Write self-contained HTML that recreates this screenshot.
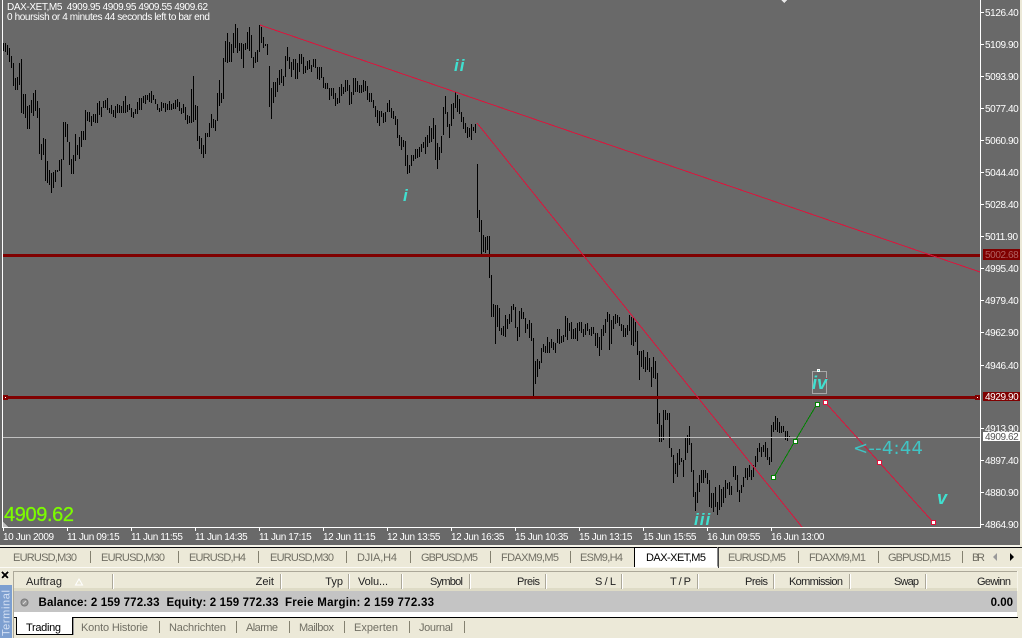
<!DOCTYPE html>
<html><head><meta charset="utf-8"><title>DAX-XET,M5</title>
<style>
html,body{margin:0;padding:0;width:1022px;height:638px;overflow:hidden;background:#ece9d8}
svg{display:block;position:absolute;left:0;top:0}
text{font-family:"Liberation Sans",sans-serif;white-space:pre}
.c text{font-size:10px;fill:#fff}
.tb text{font-size:11px;fill:#716f64}
.h text{font-size:11px;fill:#222}
.s line,.s path{shape-rendering:crispEdges}
</style></head><body>
<svg width="1022" height="638" viewBox="0 0 1022 638" xmlns="http://www.w3.org/2000/svg">
<rect x="0" y="0" width="1020" height="545" fill="#696969"/>
<g class="s">
<path stroke="#fff" stroke-width="1" fill="none" d="M2.5 0V527.5H980.5V0"/>
<path stroke="#fff" d="M981 12.5h3M981 44.5h3M981 76.5h3M981 108.5h3M981 140.5h3M981 172.5h3M981 204.5h3M981 236.5h3M981 268.5h3M981 300.5h3M981 332.5h3M981 365.5h3M981 428.5h3M981 460.5h3M981 492.5h3M981 524.5h3M3.5 528v3M67.5 528v3M131.5 528v3M195.5 528v3M259.5 528v3M323.5 528v3M387.5 528v3M451.5 528v3M515.5 528v3M579.5 528v3M643.5 528v3M707.5 528v3M771.5 528v3"/>
<!-- bars -->
<path transform="translate(.5 0)" stroke="#000" stroke-width="1" fill="none" d="M3 43V51M5 43V52M7 45V55M9 48V62M11 56V68M13 63V86M15 78V90M17 77V90M19 63V85M21 59V113M23 94V114M25 94V118M27 106V129M29 105V129M31 100V113M33 93V116M35 90V111M37 101V118M39 108V154M41 144V160M43 138V155M45 139V181M47 161V183M49 170V185M51 173V193M53 172V188M55 170V182M57 170V172M59 160V171M61 159V187M63 122V160M65 122V137M67 124V142M69 142V165M71 159V174M73 155V174M75 134V161M77 145V155M79 137V159M81 131V147M83 131V140M85 110V140M87 112V121M89 112V122M91 116V126M93 114V122M95 114V123M97 103V123M99 101V115M101 107V117M103 101V108M105 100V108M107 98V110M109 108V113M111 105V114M113 110V117M115 106V118M117 104V113M119 105V113M121 106V113M123 101V113M125 96V113M127 105V112M129 104V110M131 108V117M133 112V118M135 109V114M137 102V114M139 98V110M141 98V110M143 96V103M145 95V104M147 95V100M149 93V102M151 91V103M153 95V100M155 99V104M157 104V110M159 108V112M161 102V111M163 103V108M165 103V112M167 104V110M169 101V110M171 104V110M173 103V109M175 100V109M177 99V107M179 102V111M181 108V114M183 104V113M185 107V120M187 115V124M189 116V123M191 89V123M193 76V122M195 105V120M197 106V141M199 136V149M201 138V154M203 145V158M205 133V154M207 133V137M209 123V137M211 114V128M213 119V128M215 120V131M217 93V121M219 80V106M221 93V103M223 58V99M225 41V62M227 33V63M229 42V62M231 44V62M233 33V53M235 24V48M237 28V53M239 43V51M241 43V59M243 44V68M245 43V50M247 32V49M249 27V51M251 35V58M253 57V68M255 52V63M257 50V62M259 25V52M261 27V43M263 37V48M265 44V46M267 44V55M269 66V107M271 88V119M273 82V103M275 82V97M277 78V92M279 70V85M281 69V83M283 76V86M285 56V77M287 47V61M289 57V69M291 62V77M293 59V70M295 59V79M297 63V79M299 54V72M301 54V64M303 57V74M305 66V73M307 61V70M309 60V69M311 65V72M313 59V67M315 59V68M317 67V79M319 67V80M321 67V78M323 77V88M325 83V89M327 83V89M329 88V100M331 88V96M333 88V99M335 93V106M337 98V104M339 87V103M341 84V96M343 87V94M345 80V92M347 80V91M349 85V105M351 92V104M353 78V95M355 78V92M357 81V92M359 85V93M361 85V93M363 80V92M365 81V91M367 86V100M369 93V102M371 93V102M373 100V108M375 106V117M377 110V123M379 111V126M381 111V117M383 113V123M385 112V122M387 103V112M389 100V112M391 108V118M393 111V119M395 116V125M397 119V138M399 135V146M401 137V150M403 140V147M405 141V166M407 155V174M409 165V173M411 155V166M413 155V161M415 149V159M417 149V158M419 147V157M421 144V152M423 142V148M425 137V154M427 135V147M429 126V143M431 128V142M433 118V139M435 125V160M437 143V169M439 147V160M441 136V153M443 107V135M445 96V114M447 112V127M449 124V138M451 104V126M453 103V119M455 92V108M457 95V112M459 99V114M461 112V122M463 117V129M465 123V133M467 127V138M469 128V137M471 124V140M473 127V131M475 124V133M477 164V218M479 210V232M481 220V254M483 235V252M485 237V253M487 236V250M489 236V278M491 275V317M493 304V317M495 305V344M497 305V327M499 308V331M501 328V335M503 326V336M505 315V337M507 319V329M509 314V324M511 306V322M513 304V310M515 307V328M517 327V341M519 311V337M521 308V319M523 312V319M525 318V333M527 324V329M529 320V338M531 323V341M533 338V398M535 361V384M537 359V377M539 361V369M541 348V363M543 344V352M545 346V353M547 337V353M549 342V353M551 339V348M553 342V350M555 343V353M557 329V343M559 329V344M561 336V343M563 335V342M565 316V337M567 318V340M569 323V331M571 322V339M573 329V339M575 328V339M577 323V341M579 322V331M581 322V333M583 329V337M585 324V335M587 323V331M589 329V335M591 327V336M593 327V334M595 333V346M597 333V348M599 337V356M601 329V350M603 325V336M605 319V333M607 312V322M609 314V350M611 320V344M613 316V329M615 314V324M617 315V323M619 317V326M621 324V331M623 325V337M625 328V337M627 325V335M629 315V331M631 317V345M633 317V346M635 322V342M637 331V355M639 351V380M641 351V367M643 350V369M645 357V372M647 352V370M649 358V372M651 367V387M653 357V378M655 361V379M657 373V424M659 413V442M661 425V442M663 410V440M665 410V420M667 413V420M669 413V448M671 448V457M673 455V483M675 463V474M677 453V477M679 449V465M681 458V462M683 460V477M685 438V460M687 435V453M689 426V445M691 443V472M693 470V497M695 492V511M697 483V503M699 475V492M701 470V483M703 470V483M705 470V478M707 473V484M709 480V507M711 493V508M713 493V512M715 487V507M717 502V515M719 485V510M721 489V507M723 487V503M725 480V498M727 483V489M729 482V495M731 486V495M733 466V477M735 466V480M737 475V492M739 490V502M741 485V493M743 477V487M745 468V478M747 468V480M749 465V477M751 470V480M753 465V477M755 456V467M757 448V462M759 443V452M761 447V457M763 445V452M765 442V457M767 448V460M769 457V465M771 425V462M773 422V432M775 416V430M777 418V432M779 422V433M781 426V433M783 426V432M785 431V440M787 431V441M789 436V438"/>
<!-- horizontals -->
<rect x="3" y="254" width="977" height="3" fill="#800000"/>
<rect x="3" y="396" width="977" height="3" fill="#800000"/>
<rect x="3" y="395" width="5" height="5" fill="#800000"/><rect x="5" y="397" width="1" height="1" fill="#fff"/>
<rect x="975" y="395" width="5" height="5" fill="#800000"/><rect x="977" y="397" width="1" height="1" fill="#fff"/>
<rect x="3" y="437" width="977" height="1" fill="#c0c0c0"/>
<!-- trend lines -->
<line x1="260" y1="25" x2="980" y2="272" stroke="#dc143c"/>
<line x1="477" y1="123" x2="802" y2="527" stroke="#dc143c"/>
<line x1="825" y1="402" x2="879" y2="462" stroke="#dc143c"/>
<line x1="879" y1="462" x2="933" y2="522" stroke="#dc143c"/>
<line x1="774" y1="477" x2="795" y2="441" stroke="#008000"/>
<line x1="795" y1="441" x2="817" y2="404" stroke="#008000"/>
<g fill="#fff" stroke="#dc143c"><rect x="823.5" y="400.5" width="4" height="4"/><rect x="877.5" y="460.5" width="4" height="4"/><rect x="931.5" y="520.5" width="4" height="4"/></g>
<g fill="#fff" stroke="#008000"><rect x="771.5" y="475.5" width="4" height="4"/><rect x="793.5" y="439.5" width="4" height="4"/><rect x="815.5" y="402.5" width="4" height="4"/></g>
<rect x="812.5" y="371.5" width="14" height="22" fill="none" stroke="#a8a8a8"/>
<rect x="817" y="369" width="3" height="3" fill="#fff"/><rect x="818" y="370" width="1" height="1" fill="#40e0d0"/>
<rect x="826" y="378" width="1" height="1" fill="#dc143c"/>
<path fill="#e8e8e8" d="M781 0h6l-3 3z"/>
<path fill="#c0c0c0" d="M3 522l5 5H3z"/>
<!-- price boxes -->
<rect x="983" y="249" width="37" height="11" fill="#800000"/>
<rect x="983" y="392" width="37" height="9" fill="#800000"/>
<rect x="983" y="432" width="37" height="9" fill="#fff"/>
</g>
<!-- chart text -->
<g class="c">
<text x="7" y="10" textLength="201" lengthAdjust="spacing">DAX-XET,M5  4909.95 4909.95 4909.55 4909.62</text>
<text x="7" y="20" textLength="203" lengthAdjust="spacing">0 hoursish or 4 minutes 44 seconds left to bar end</text>
<g letter-spacing="-.4">
<text x="985" y="16">5126.40</text><text x="985" y="48">5109.90</text><text x="985" y="80">5093.90</text><text x="985" y="112">5077.40</text><text x="985" y="144">5060.90</text><text x="985" y="176">5044.40</text><text x="985" y="208">5028.40</text><text x="985" y="240">5011.90</text><text x="985" y="272">4995.40</text><text x="985" y="304">4979.40</text><text x="985" y="336">4962.90</text><text x="985" y="369">4946.40</text><text x="985" y="432">4913.90</text><text x="985" y="464">4897.40</text><text x="985" y="496">4880.90</text><text x="985" y="528">4864.90</text>
<text x="985" y="258" style="fill:#b06060">5002.68</text>
<text x="985" y="400">4929.90</text>
<text x="985" y="440" style="fill:#555">4909.62</text>
<text x="3" y="540">10 Jun 2009</text><text x="67" y="540">11 Jun 09:15</text><text x="131" y="540">11 Jun 11:55</text><text x="195" y="540">11 Jun 14:35</text><text x="259" y="540">11 Jun 17:15</text><text x="323" y="540">12 Jun 11:15</text><text x="387" y="540">12 Jun 13:55</text><text x="451" y="540">12 Jun 16:35</text><text x="515" y="540">15 Jun 10:35</text><text x="579" y="540">15 Jun 13:15</text><text x="643" y="540">15 Jun 15:55</text><text x="707" y="540">16 Jun 09:55</text><text x="771" y="540">16 Jun 13:00</text>
</g></g>
<g fill="#40e0d0" font-weight="bold" font-style="italic" font-size="17">
<text x="454" y="71" letter-spacing="1">ii</text>
<text x="403" y="201">i</text>
<text x="694" y="525" letter-spacing="1">iii</text>
<text x="812" y="389" style="font-size:18px">iv</text>
<text x="937" y="504" style="font-size:18px">v</text>
</g>
<text x="853" y="454" font-size="18" fill="#40c4c4" style="font-family:'DejaVu Sans',sans-serif" textLength="70" lengthAdjust="spacing">&lt;--4:44</text>
<text x="4" y="521" font-size="20" fill="#7cfc00" stroke="#7cfc00" stroke-width=".25" textLength="70" lengthAdjust="spacing">4909.62</text>
<!-- chart tabs -->
<g class="s">
<rect x="0" y="545" width="1022" height="2" fill="#f7f5ea"/>
<rect x="0" y="547" width="1022" height="1" fill="#111"/>
<rect x="1020" y="0" width="2" height="547" fill="#ece9d8"/>
<rect x="0" y="567" width="1022" height="1" fill="#fbfaf5"/>
<rect x="634" y="547" width="84" height="20" fill="#fff"/>
<path fill="none" stroke="#000" d="M634.5 567V547.5H717.5"/>
<path fill="none" stroke="#888" d="M717.5 548V566.5"/>
<rect x="718" y="548" width="1" height="20" fill="#444"/>
<path stroke="#848170" d="M90.5 551v12M178.5 551v12M258.5 551v12M346.5 551v12M410.5 551v12M490.5 551v12M570.5 551v12M798.5 551v12M878.5 551v12M962.5 551v12"/>
</g>
<g class="tb">
<text x="13" y="561" textLength="64" lengthAdjust="spacing">EURUSD,M30</text>
<text x="101" y="561" textLength="64" lengthAdjust="spacing">EURUSD,M30</text>
<text x="189" y="561" textLength="57" lengthAdjust="spacing">EURUSD,H4</text>
<text x="270" y="561" textLength="64" lengthAdjust="spacing">EURUSD,M30</text>
<text x="357" y="561" textLength="40" lengthAdjust="spacing">DJIA,H4</text>
<text x="421" y="561" textLength="57" lengthAdjust="spacing">GBPUSD,M5</text>
<text x="501" y="561" textLength="58" lengthAdjust="spacing">FDAXM9,M5</text>
<text x="580" y="561" textLength="43" lengthAdjust="spacing">ESM9,H4</text>
<text x="646" y="561" textLength="60" lengthAdjust="spacing" style="fill:#000">DAX-XET,M5</text>
<text x="728" y="561" textLength="58" lengthAdjust="spacing">EURUSD,M5</text>
<text x="809" y="561" textLength="57" lengthAdjust="spacing">FDAXM9,M1</text>
<text x="888" y="561" textLength="63" lengthAdjust="spacing">GBPUSD,M15</text>
<text x="972" y="561" textLength="13" lengthAdjust="spacing">BR</text>
</g>
<path fill="#999" d="M997 553v8l-4-4z"/>
<path fill="#000" d="M1010 553v8l4-4z"/>
<!-- terminal -->
<g class="s">
<rect x="13" y="571" width="1005" height="1" fill="#aca899"/>
<rect x="13" y="571" width="1" height="67" fill="#aca899"/>
<rect x="1017" y="571" width="1" height="20" fill="#f7f5ea"/>
<rect x="14" y="588" width="1003" height="3" fill="#dedbc6"/>
<path stroke="#aca899" d="M112.5 574v15M280.5 574v15M348.5 574v15M401.5 574v15M469.5 574v15M545.5 574v15M621.5 574v15M697.5 574v15M773.5 574v15M849.5 574v15M925.5 574v15"/>
<path stroke="#fff" d="M113.5 574v15M281.5 574v15M349.5 574v15M402.5 574v15M470.5 574v15M546.5 574v15M622.5 574v15M698.5 574v15M774.5 574v15M850.5 574v15M926.5 574v15"/>
<rect x="14" y="591" width="1003" height="21" fill="#c4c4c4"/>
<rect x="14" y="612" width="1003" height="5" fill="#fff"/>
<rect x="14" y="617" width="1004" height="1" fill="#000"/>
<rect x="16" y="617" width="56" height="18" fill="#fff"/>
<path fill="none" stroke="#000" d="M16.5 617V634.5H72.5V618"/>
<rect x="73" y="618" width="1" height="17" fill="#999"/>
<path stroke="#848170" d="M159.5 621v12M236.5 621v12M289.5 621v12M344.5 621v12M409.5 621v12M464.5 621v12"/>
<rect x="0" y="585" width="12" height="53" fill="#7d9fd0"/>
<path stroke="#000" stroke-width="1.6" d="M2 572l6 6M8 572l-6 6"/>
</g>
<text transform="translate(9.5 636) rotate(-90)" font-size="11" fill="#d4e0f4" textLength="46" lengthAdjust="spacing">Terminal</text>
<g class="h">
<text x="26" y="585" textLength="36" lengthAdjust="spacing">Auftrag</text>
<path fill="none" stroke="#fff" d="M75.5 585l3.5-6 3.5 6z"/>
<text x="274" y="585" text-anchor="end">Zeit</text>
<text x="343" y="585" text-anchor="end">Typ</text>
<text x="358" y="585" textLength="30" lengthAdjust="spacing">Volu...</text>
<text x="430" y="585" textLength="33" lengthAdjust="spacing">Symbol</text>
<text x="517" y="585" textLength="23" lengthAdjust="spacing">Preis</text>
<text x="595" y="585" textLength="21" lengthAdjust="spacing">S / L</text>
<text x="670" y="585" textLength="21" lengthAdjust="spacing">T / P</text>
<text x="745" y="585" textLength="23" lengthAdjust="spacing">Preis</text>
<text x="789" y="585" textLength="54" lengthAdjust="spacing">Kommission</text>
<text x="894" y="585" textLength="25" lengthAdjust="spacing">Swap</text>
<text x="977" y="585" textLength="34" lengthAdjust="spacing">Gewinn</text>
</g>
<circle cx="24.5" cy="602.5" r="3.5" fill="#999" stroke="#777"/>
<path d="M23 604l3-3" stroke="#ddd"/>
<g font-size="11.5" font-weight="bold" fill="#000">
<text x="38.5" y="606" textLength="121" lengthAdjust="spacing">Balance: 2 159 772.33</text>
<text x="166.5" y="606" textLength="112" lengthAdjust="spacing">Equity: 2 159 772.33</text>
<text x="285" y="606" textLength="149" lengthAdjust="spacing">Freie Margin: 2 159 772.33</text>
<text x="1013" y="606" text-anchor="end">0.00</text>
</g>
<g class="tb">
<text x="26" y="631" textLength="35" lengthAdjust="spacing" style="fill:#000">Trading</text>
<text x="81" y="631" textLength="67" lengthAdjust="spacing">Konto Historie</text>
<text x="169" y="631" textLength="57" lengthAdjust="spacing">Nachrichten</text>
<text x="246" y="631" textLength="32" lengthAdjust="spacing">Alarme</text>
<text x="299" y="631" textLength="35" lengthAdjust="spacing">Mailbox</text>
<text x="354" y="631" textLength="44" lengthAdjust="spacing">Experten</text>
<text x="419" y="631" textLength="34" lengthAdjust="spacing">Journal</text>
</g>
</svg>
</body></html>
